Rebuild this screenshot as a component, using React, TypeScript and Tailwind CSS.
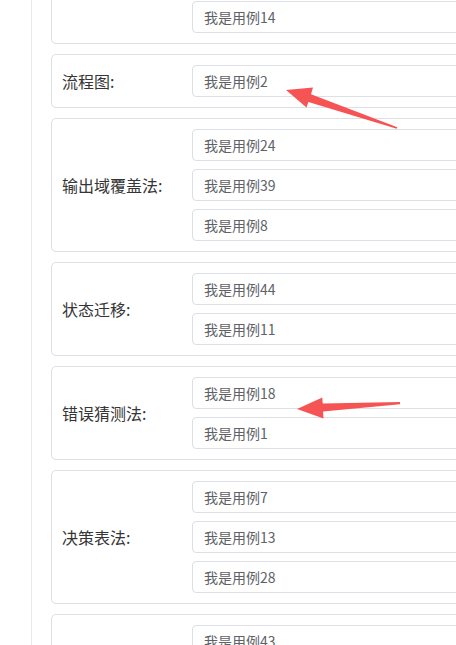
import React from "react";

type Group = { label: string; cases: number[] };

const groups: Group[] = [
  { label: "边界值分析法:", cases: [5, 31, 14] },
  { label: "流程图:", cases: [2] },
  { label: "输出域覆盖法:", cases: [24, 39, 8] },
  { label: "状态迁移:", cases: [44, 11] },
  { label: "错误猜测法:", cases: [18, 1] },
  { label: "决策表法:", cases: [7, 13, 28] },
  { label: "因果图:", cases: [43, 20, 35] },
];

function CaseGroup({ group }: { group: Group }) {
  return (
    <div className="flex items-center w-[640px] border border-[#dcdfe6] rounded-[5px] p-[10px] mb-[10px] bg-white">
      <div className="w-[130px] shrink-0 text-[16px] text-[#353535]">{group.label}</div>
      <div className="flex flex-col gap-2 flex-1">
        {group.cases.map((n) => (
          <div
            key={n}
            className="h-8 flex items-center px-[11px] border border-[#dcdfe6] rounded-[4px] text-[14px] text-[#606266]"
          >
            我是用例{n}
          </div>
        ))}
      </div>
    </div>
  );
}

export default function App() {
  return (
    <div
      className="relative w-[456px] h-[645px] overflow-hidden bg-white"
      style={{ fontFamily: '"Noto Sans CJK SC", "Noto Sans", sans-serif' }}
    >
      <div className="flex h-full">
        <div className="w-[31px] shrink-0" />
        <div className="border-l border-[#e6e8ee] pl-[19px] flex-1">
          <div className="mt-[-90px]">
            {groups.map((g) => (
              <CaseGroup key={g.label} group={g} />
            ))}
          </div>
        </div>
      </div>

      {/* annotation arrows */}
      <svg className="absolute inset-0 pointer-events-none" width="456" height="645">
        <polygon
          fill="#f65454"
          points="286,90 313,87.5 311,94.3 397.3,127.2 396.7,128.8 308.4,101.9 306.5,107.6"
        />
        <polygon
          fill="#f65454"
          points="297,409 322.3,397.5 322.7,403.5 400,402 400,404.2 323.1,411.5 323.5,418.5"
        />
      </svg>
    </div>
  );
}
